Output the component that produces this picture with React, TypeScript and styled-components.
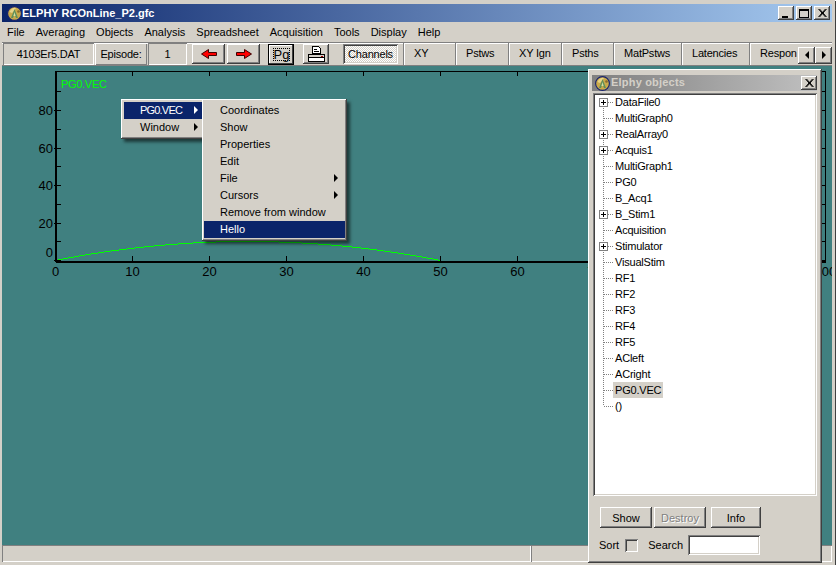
import React from 'react';
import styled, { createGlobalStyle, css } from 'styled-components';

const FACE = '#d4d0c8';
const NAVY = '#0a246a';
const TEAL = '#408080';

const raised = css`
  box-shadow: inset -1px -1px 0 #404040, inset 1px 1px 0 #ffffff, inset -2px -2px 0 #808080, inset 2px 2px 0 ${FACE};
`;

const sunken = css`
  box-shadow: inset 1px 1px 0 #808080, inset -1px -1px 0 #ffffff, inset 2px 2px 0 #404040, inset -2px -2px 0 ${FACE};
`;

const GlobalStyle = createGlobalStyle`
  html, body {
    margin: 0;
    padding: 0;
    background: #ffffff;
    overflow: hidden;
  }
  body {
    font-family: "Liberation Sans", Arial, sans-serif;
    font-size: 11px;
    color: #000000;
  }
  * {
    box-sizing: border-box;
  }
`;

const Frame = styled.div`
  width: 835px;
  height: 565px;
  background: ${FACE};
  border-style: solid;
  border-color: ${FACE};
  border-width: 4px 3px 3px 2px;
  box-shadow: inset 0 1px 0 #ffffff, 1px 1px 0 #404040;
  display: flex;
  flex-direction: column;
`;

const TitleBar = styled.div`
  height: 18px;
  flex: none;
  background: linear-gradient(90deg, ${NAVY}, #a6caf0);
  display: flex;
  align-items: center;
  padding: 0 2px 0 5px;
  gap: 2px;
`;

const TitleText = styled.span`
  color: #ffffff;
  font-weight: bold;
  font-size: 11px;
  flex: 1;
  margin-left: -2px;
  white-space: nowrap;
`;

const CaptionButton = styled.button`
  width: 16px;
  height: 14px;
  padding: 0;
  border: 0;
  background: ${FACE};
  ${raised};
  display: flex;
  align-items: center;
  justify-content: center;
  flex: none;
`;

const MenuBar = styled.div`
  height: 20px;
  flex: none;
  display: flex;
  align-items: center;
  padding-left: 5px;
  gap: 11px;
`;

const Toolbar = styled.div`
  height: 24px;
  flex: none;
  display: flex;
  align-items: center;
  padding-left: 1px;
  letter-spacing: -0.2px;
  box-shadow: inset 0 1px 0 #808080, inset 0 2px 0 #ffffff, inset 0 -1px 0 #808080;
`;

const SunkenField = styled.div<{ $w: number; $ml?: number }>`
  width: ${(p) => p.$w}px;
  margin-left: ${(p) => p.$ml ?? 0}px;
  height: 22px;
  flex: none;
  display: flex;
  align-items: center;
  justify-content: center;
  box-shadow: inset 1px 1px 0 #808080, inset -1px -1px 0 #ffffff;
`;

const RaisedField = styled.div<{ $w: number; $ml?: number }>`
  width: ${(p) => p.$w}px;
  margin-left: ${(p) => p.$ml ?? 0}px;
  height: 22px;
  flex: none;
  display: flex;
  align-items: center;
  justify-content: center;
  box-shadow: inset 1px 1px 0 #ffffff, inset -1px -1px 0 #808080;
`;

const ToolButton = styled.button<{ $w: number; $ml: number; $focused?: boolean }>`
  width: ${(p) => p.$w}px;
  height: ${(p) => (p.$focused ? 21 : 20)}px;
  margin-left: ${(p) => p.$ml}px;
  padding: 0;
  border: 0;
  flex: none;
  background: ${FACE};
  font: inherit;
  display: flex;
  align-items: center;
  justify-content: center;
  ${raised};
  ${(p) =>
    p.$focused &&
    css`
      box-shadow: inset 0 0 0 1px #000000, inset -2px -2px 0 #404040, inset 2px 2px 0 #ffffff;
    `}
`;

const FocusRect = styled.span`
  border: 1px dotted #000000;
  width: 17px;
  height: 13px;
  font-size: 13px;
  line-height: 12px;
  text-align: center;
`;

const PressedTab = styled.div`
  width: 55px;
  height: 20px;
  margin-left: 14px;
  flex: none;
  display: flex;
  align-items: center;
  justify-content: center;
  background-color: #ffffff;
  background-image: conic-gradient(${FACE} 25%, #ffffff 0 50%, ${FACE} 0 75%, #ffffff 0);
  background-size: 2px 2px;
  ${sunken};
`;

const TabStrip = styled.div`
  margin-left: 5px;
  flex: 1;
  min-width: 0;
  height: 22px;
  display: flex;
  overflow: hidden;
`;

const Tab = styled.div<{ $w: number }>`
  flex: 0 0 ${(p) => p.$w}px;
  padding: 0 0 2px 11px;
  display: flex;
  align-items: center;
  white-space: nowrap;
  box-shadow: inset 1px 0 0 #808080, inset 2px 0 0 #ffffff;
`;

const ScrollButton = styled.button`
  width: 17px;
  height: 17px;
  padding: 0;
  border: 0;
  flex: none;
  margin-top: 2px;
  background: ${FACE};
  ${raised};
  display: flex;
  align-items: center;
  justify-content: center;
`;

const Client = styled.div`
  position: relative;
  flex: 1;
  min-height: 0;
  background: ${TEAL};
`;

const PlotSvg = styled.svg`
  display: block;
  width: 100%;
  height: 100%;
  font-family: "Liberation Sans", Arial, sans-serif;
  font-size: 13px;
`;

const StatusBar = styled.div`
  height: 17px;
  flex: none;
  display: flex;
`;

const StatusPanel = styled.div<{ $w?: number }>`
  ${(p) => (p.$w ? `flex: 0 0 ${p.$w}px;` : 'flex: 1;')}
  box-shadow: inset 1px 1px 0 #808080, inset -1px -1px 0 #ffffff;
`;

const Popup = styled.div<{ $left: number; $top: number; $w: number; $z: number; $padLeft: number }>`
  position: absolute;
  left: ${(p) => p.$left}px;
  top: ${(p) => p.$top}px;
  width: ${(p) => p.$w}px;
  z-index: ${(p) => p.$z};
  background: ${FACE};
  padding: 3px 2px 3px ${(p) => p.$padLeft}px;
  box-shadow: inset -1px -1px 0 #404040, inset 1px 1px 0 #ffffff, inset -2px -2px 0 #808080, 3px 3px 3px rgba(0, 0, 0, 0.55);
`;

const PopupItem = styled.div<{ $active?: boolean; $pad: number; $padRight: number }>`
  height: 17px;
  display: flex;
  align-items: center;
  justify-content: space-between;
  padding: 0 ${(p) => p.$padRight}px 2px ${(p) => p.$pad}px;
  white-space: nowrap;
  background: ${(p) => (p.$active ? NAVY : 'transparent')};
  color: ${(p) => (p.$active ? '#ffffff' : '#000000')};
`;

const TightLabel = styled.span`
  letter-spacing: -0.8px;
`;

const Arrow = styled.span<{ $flip?: boolean }>`
  width: 0;
  height: 0;
  border-style: solid;
  border-width: 4px 0 4px 4px;
  border-color: transparent transparent transparent currentColor;
  transform: ${(p) => (p.$flip ? 'scaleX(-1)' : 'none')};
`;

const ObjectsWindow = styled.div`
  position: absolute;
  left: 586px;
  top: 3px;
  width: 234px;
  height: 494px;
  z-index: 3;
  background: ${FACE};
  padding: 6px 5px 4px 4px;
  display: flex;
  flex-direction: column;
  ${raised};
`;

const ObjectsCaption = styled.div`
  height: 16px;
  flex: none;
  background: linear-gradient(90deg, #808080, #c0c0c0);
  display: flex;
  align-items: center;
  gap: 2px;
  padding: 0 0 0 3px;
  color: ${FACE};
  font-weight: bold;
  font-size: 11px;
  letter-spacing: 0.2px;
`;

const ObjectsTitle = styled.span`
  flex: 1;
  margin: -2px 0 0 -1px;
`;

const TreeView = styled.div`
  height: 403px;
  margin: 2px 0 0 1px;
  flex: none;
  background: #ffffff;
  padding: 1px 0 0 2px;
  letter-spacing: -0.2px;
  ${sunken};
`;

const TreeRow = styled.div`
  height: 16px;
  display: flex;
  align-items: center;
`;

const TreeLabel = styled.span<{ $selected?: boolean }>`
  padding: 0 2px;
  height: 16px;
  line-height: 16px;
  background: ${(p) => (p.$selected ? FACE : 'transparent')};
`;

const ObjectsFooter = styled.div`
  flex: 1;
  padding: 11px 0 0 8px;
  display: flex;
  flex-direction: column;
  gap: 7px;
`;

const FooterRow = styled.div<{ $shiftLeft?: number }>`
  display: flex;
  align-items: center;
  margin-left: ${(p) => -(p.$shiftLeft ?? 0)}px;
`;

const FooterButton = styled.button<{ $w: number; $ml?: number; $disabled?: boolean }>`
  width: ${(p) => p.$w}px;
  height: 21px;
  margin-left: ${(p) => p.$ml ?? 0}px;
  padding: 0;
  border: 0;
  background: ${FACE};
  font: inherit;
  color: ${(p) => (p.$disabled ? '#808080' : '#000000')};
  text-shadow: ${(p) => (p.$disabled ? '1px 1px 0 #ffffff' : 'none')};
  ${raised};
`;

const CheckBox = styled.span`
  width: 13px;
  height: 13px;
  margin: 0 10px 0 6px;
  ${sunken};
  background: ${FACE};
  flex: none;
`;

const SearchInput = styled.div`
  width: 72px;
  height: 20px;
  margin-left: 5px;
  background: #ffffff;
  ${sunken};
`;

const MENU_ITEMS = ['File', 'Averaging', 'Objects', 'Analysis', 'Spreadsheet', 'Acquisition', 'Tools', 'Display', 'Help'];

const TABS = [
  { label: 'XY', w: 52 },
  { label: 'Pstws', w: 53 },
  { label: 'XY Ign', w: 53 },
  { label: 'Psths', w: 52 },
  { label: 'MatPstws', w: 68 },
  { label: 'Latencies', w: 68 },
  { label: 'Respon', w: 49 },
];

const SUB_ITEMS = [
  { label: 'Coordinates' },
  { label: 'Show' },
  { label: 'Properties' },
  { label: 'Edit' },
  { label: 'File', more: true },
  { label: 'Cursors', more: true },
  { label: 'Remove from window' },
  { label: 'Hello', active: true },
];

const TREE = [
  { label: 'DataFile0', open: true },
  { label: 'MultiGraph0' },
  { label: 'RealArray0', open: true },
  { label: 'Acquis1', open: true },
  { label: 'MultiGraph1' },
  { label: 'PG0' },
  { label: 'B_Acq1' },
  { label: 'B_Stim1', open: true },
  { label: 'Acquisition' },
  { label: 'Stimulator', open: true },
  { label: 'VisualStim' },
  { label: 'RF1' },
  { label: 'RF2' },
  { label: 'RF3' },
  { label: 'RF4' },
  { label: 'RF5' },
  { label: 'ACleft' },
  { label: 'ACright' },
  { label: 'PG0.VEC', selected: true },
  { label: '()' },
];

const AppLogo = () => (
  <svg width="15" height="15" viewBox="0 0 15 15" style={{ flex: 'none' }}>
    <circle cx="7.5" cy="7.5" r="6.9" fill="#c9a94a" stroke="#14206e" strokeWidth="1.1" />
    <path d="M2.5 6 A5.5 5.5 0 0 1 9 2 L7 5 L5 7 Z" fill="#e8d488" />
    <path d="M7.5 3 L11 12 L9 12 L7.5 8 L6 12 L4 12 Z" fill="#5f8f5a" />
    <path d="M7.5 6 L8.6 10 L6.4 10 Z" fill="#d8e0a0" />
    <circle cx="11.5" cy="5.5" r="1.3" fill="#8a6a2a" />
  </svg>
);

const CloseGlyph = () => (
  <svg width="9" height="8" viewBox="0 0 9 8">
    <path d="M0.5 0 L7.5 8 M1.5 0 L8.5 8 M7.5 0 L0.5 8 M8.5 0 L1.5 8" stroke="#000" strokeWidth="1" />
  </svg>
);

const ArrowIcon = ({ flip }: { flip?: boolean }) => (
  <svg width="16" height="10" viewBox="0 0 16 10" transform={flip ? 'scale(-1 1)' : undefined}>
    <path d="M0.5 5 L7.5 0.5 L7.5 3.5 L15.5 3.5 L15.5 6.5 L7.5 6.5 L7.5 9.5 Z" fill="#ff0000" stroke="#400000" strokeWidth="1" />
  </svg>
);

const PrintIcon = () => (
  <svg width="17" height="16" viewBox="0 0 17 16" shapeRendering="crispEdges">
    <path d="M4.5 0.5 H10.5 L12.5 2.5 V7.5 H4.5 Z" fill="#fff" stroke="#000" />
    <path d="M6 3.5 H9 M6 5.5 H11" stroke="#000" />
    <path d="M0.5 8.5 H16.5 V11.5 H0.5 Z" fill="#d4d0c8" stroke="#000" />
    <path d="M0.5 11.5 H16.5 V15.5 H0.5 Z" fill="#fff" stroke="#000" />
    <rect x="13" y="9.5" width="2" height="1" fill="#a00" />
  </svg>
);

const TreeGutter = ({ index, last, open }: { index: number; last: boolean; open?: boolean }) => (
  <svg width="18" height="16" viewBox="0 0 18 16" shapeRendering="crispEdges" style={{ flex: 'none' }}>
    <path
      d={`M8.5 ${index === 0 ? 8 : 0} V${last ? 8 : 16} M8.5 8.5 H18`}
      stroke="#808080"
      strokeDasharray="1 1"
      fill="none"
    />
    {open && (
      <g>
        <rect x="4.5" y="4.5" width="8" height="8" fill="#fff" stroke="#808080" />
        <path d="M6 8.5 H11 M8.5 6 V11" stroke="#000" />
      </g>
    )}
  </svg>
);

// the curve is drawn in whole pixels so that it shows the steps of the original
const buildCurve = () => {
  const pts: string[] = [];
  for (let px = 58; px <= 440; px += 1) {
    const t = (px - 55.6) / (440 - 55.6);
    const y = Math.round(260 - 19 * 4 * t * (1 - t));
    pts.push(`${px},${y}`);
  }
  return pts.join(' ');
};

const Plot = () => {
  const xTicks = Array.from({ length: 11 }, (_, i) => 55.5 + i * 77);
  const yTicks = Array.from({ length: 10 }, (_, i) => 260 - i * 18.75);
  return (
    <PlotSvg viewBox="2 66 830 479" preserveAspectRatio="none">
      <g stroke="#000" shapeRendering="crispEdges">
        <path d="M55.5 71 H825.5 V261 H55.5 Z M55.5 262 H825.5" fill="none" />
        <path d="M56.5 71 V262" fill="none" />
        {xTicks.map((x) => (
          <path key={x} d={`M${x} 71 V76 M${x} 256 V261`} />
        ))}
        {yTicks.map((y, i) => (
          <path key={y} d={`M${i % 2 === 0 ? 54 : 55} ${Math.round(y) + 0.5} H61 M820 ${Math.round(y) + 0.5} H825`} />
        ))}
      </g>
      <text x="61" y="88" fill="#00ff00" fontSize="11" letterSpacing="-0.3">PG0.VEC</text>
      {[80, 60, 40, 20].map((v) => (
        <text key={v} x="53" y={260 - (v / 20) * 37.5 + 5} textAnchor="end">{v}</text>
      ))}
      <text x="53" y="257" textAnchor="end">0</text>
      {xTicks.map((x, i) => (
        <text key={x} x={x} y="276" textAnchor="middle">{i * 10}</text>
      ))}
      <polyline points={buildCurve()} fill="none" stroke="#00ff00" shapeRendering="crispEdges" />
    </PlotSvg>
  );
};

const App = () => (
  <>
    <GlobalStyle />
    <Frame>
      <TitleBar>
        <AppLogo />
        <TitleText>ELPHY RCOnLine_P2.gfc</TitleText>
        <CaptionButton aria-label="Minimize">
          <svg width="8" height="9" viewBox="0 0 8 9"><rect x="0" y="7" width="6" height="2" fill="#000" /></svg>
        </CaptionButton>
        <CaptionButton aria-label="Maximize">
          <svg width="10" height="9" viewBox="0 0 10 9" shapeRendering="crispEdges"><path d="M0.5 1.5 H9.5 V8.5 H0.5 Z" fill="none" stroke="#000" /><path d="M0 0.5 H10" stroke="#000" /></svg>
        </CaptionButton>
        <CaptionButton aria-label="Close"><CloseGlyph /></CaptionButton>
      </TitleBar>
      <MenuBar>
        {MENU_ITEMS.map((item) => (
          <span key={item}>{item}</span>
        ))}
      </MenuBar>
      <Toolbar>
        <SunkenField $w={91}>4103Er5.DAT</SunkenField>
        <RaisedField $w={52} $ml={1}>Episode:</RaisedField>
        <SunkenField $w={39} $ml={1}>1</SunkenField>
        <ToolButton $w={33} $ml={5} aria-label="Previous"><ArrowIcon /></ToolButton>
        <ToolButton $w={33} $ml={2} aria-label="Next"><ArrowIcon flip /></ToolButton>
        <ToolButton $w={26} $ml={8} $focused><FocusRect>Pg</FocusRect></ToolButton>
        <ToolButton $w={26} $ml={9} aria-label="Print"><PrintIcon /></ToolButton>
        <PressedTab>Channels</PressedTab>
        <TabStrip>
          {TABS.map((tab) => (
            <Tab key={tab.label} $w={tab.w}>{tab.label}</Tab>
          ))}
        </TabStrip>
        <ScrollButton aria-label="Scroll left"><Arrow $flip /></ScrollButton>
        <ScrollButton aria-label="Scroll right"><Arrow /></ScrollButton>
      </Toolbar>
      <Client>
        <Plot />
        <Popup $left={119} $top={33} $w={84} $z={1} $padLeft={3}>
          <PopupItem $pad={16} $padRight={5} $active><TightLabel>PG0.VEC</TightLabel><Arrow /></PopupItem>
          <PopupItem $pad={16} $padRight={5}>Window<Arrow /></PopupItem>
        </Popup>
        <Popup $left={200} $top={33} $w={145} $z={2} $padLeft={2}>
          {SUB_ITEMS.map((item) => (
            <PopupItem key={item.label} $pad={16} $padRight={7} $active={item.active}>
              {item.label}
              {item.more && <Arrow />}
            </PopupItem>
          ))}
        </Popup>
        <ObjectsWindow>
          <ObjectsCaption>
            <AppLogo />
            <ObjectsTitle>Elphy objects</ObjectsTitle>
            <CaptionButton aria-label="Close objects"><CloseGlyph /></CaptionButton>
          </ObjectsCaption>
          <TreeView>
            {TREE.map((node, i) => (
              <TreeRow key={node.label}>
                <TreeGutter index={i} last={i === TREE.length - 1} open={node.open} />
                <TreeLabel $selected={node.selected}>{node.label}</TreeLabel>
              </TreeRow>
            ))}
          </TreeView>
          <ObjectsFooter>
            <FooterRow>
              <FooterButton $w={52}>Show</FooterButton>
              <FooterButton $w={52} $ml={2} $disabled>Destroy</FooterButton>
              <FooterButton $w={50} $ml={5}>Info</FooterButton>
            </FooterRow>
            <FooterRow $shiftLeft={1}>
              <span>Sort</span>
              <CheckBox />
              <span>Search</span>
              <SearchInput />
            </FooterRow>
          </ObjectsFooter>
        </ObjectsWindow>
      </Client>
      <StatusBar>
        <StatusPanel $w={529} />
        <StatusPanel />
      </StatusBar>
    </Frame>
  </>
);

export default App;
